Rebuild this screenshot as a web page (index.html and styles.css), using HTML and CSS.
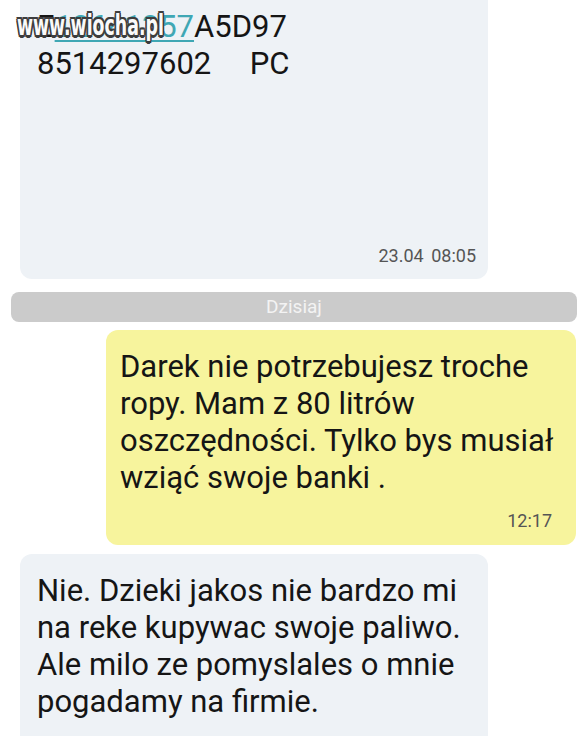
FILE: index.html
```html
<!DOCTYPE html>
<html lang="pl">
<head>
  <meta charset="UTF-8">
  <meta name="viewport" content="width=device-width, initial-scale=1.0">
  <title>Wiadomości</title>
  <link rel="stylesheet" href="styles.css">
</head>
<body>
  <div class="chat">

    <!-- older incoming message, cut off at the top -->
    <div class="bubble incoming cut">
      <p class="text">E<span class="link">12641357</span>A5D97<br>8514297602&nbsp;&nbsp;&nbsp;&nbsp;&nbsp;PC</p>
      <div class="time first-time">23.04 08:05</div>
    </div>

    <div class="divider">Dzisiaj</div>

    <!-- outgoing -->
    <div class="bubble outgoing">
      <p class="text">Darek nie potrzebujesz troche<br>ropy. Mam z 80 litrów<br>oszczędności. Tylko bys musiał<br>wziąć swoje banki .</p>
      <div class="time">12:17</div>
    </div>

    <!-- reply -->
    <div class="bubble incoming reply">
      <p class="text">Nie. Dzieki jakos nie bardzo mi<br>na reke kupywac swoje paliwo.<br>Ale milo ze pomyslales o mnie<br>pogadamy na firmie.</p>
      <div class="time">12:21</div>
    </div>
  </div>

  <div class="watermark">www.wiocha.pl</div>
</body>
</html>
```

FILE: styles.css
```css
html, body {
  margin: 0;
  height: 736px;
  overflow: hidden;
}

body {
  font-family: Roboto, "Liberation Sans", sans-serif;
  background: #fff;
  color: #151515;
  position: relative;
}

.chat {
  display: flex;
  flex-direction: column;
}

.bubble {
  border-radius: 12px;
}

.incoming {
  background: #eef2f6;
  margin-left: 20px;
  width: 468px;
  padding: 14px 12px 12px 17px;
  box-sizing: border-box;
  margin-top: 8px;
}

.cut {
  margin-top: 0;
  padding-top: 8px;
  border-top-left-radius: 0;
  border-top-right-radius: 0;
}

.reply {
  margin-top: 9px;
  padding-top: 18px;
}

.outgoing {
  background: #f7f49d;
  margin-left: 106px;
  margin-right: 2px;
  padding: 18px 24px 13px 14px;
  margin-top: 8px;
}

.text {
  margin: 0;
  font-size: 31px;
  line-height: 37px;
  white-space: nowrap;
}

.link {
  color: #3fa7b4;
  text-decoration: underline;
  text-decoration-thickness: 2px;
  text-underline-offset: 3px;
}

.time {
  text-align: right;
  font-size: 18px;
  line-height: 22px;
  color: #555;
  margin-top: 14px;
}

.first-time {
  margin-top: 163px;
  word-spacing: 3px;
}

.divider {
  margin: 13px 1px 0 11px;
  height: 30px;
  line-height: 30px;
  background: #cbcbcb;
  border-radius: 8px;
  text-align: center;
  color: #f3f3f3;
  font-size: 19px;
}

/* site stamp laid over the screenshot */
.watermark {
  position: absolute;
  top: 12px;
  left: 17px;
  font-family: "DejaVu Sans", sans-serif;
  font-weight: bold;
  font-size: 28px;
  line-height: 28px;
  color: #fafafa;
  transform: scaleX(0.62);
  transform-origin: left top;
  text-shadow:
    -2px -2px 0 #3d3d3d, 2px -2px 0 #3d3d3d,
    -2px 2px 0 #3d3d3d, 2px 2px 0 #3d3d3d,
    0 -2.5px 0 #3d3d3d, 0 2.5px 0 #3d3d3d,
    -2.5px 0 0 #3d3d3d, 2.5px 0 0 #3d3d3d;
}
```
